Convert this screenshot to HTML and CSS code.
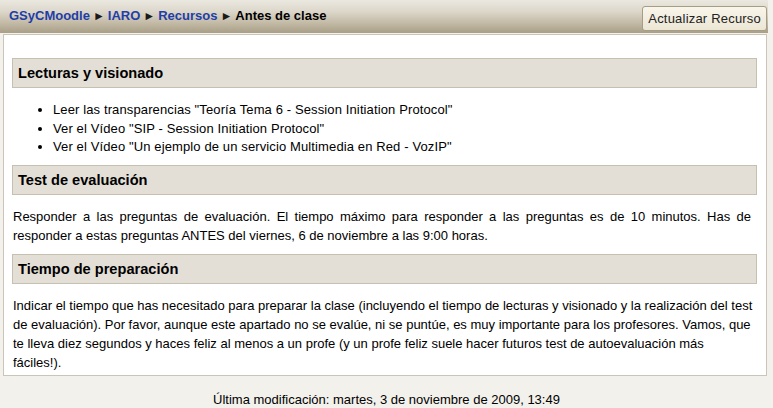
FILE: index.html
```html
<!DOCTYPE html>
<html lang="es">
<head>
<meta charset="utf-8">
<title>Antes de clase</title>
<link rel="stylesheet" href="styles.css">
</head>
<body>
<div class="navbar">
  <div class="breadcrumb">
    <a href="#">GSyCMoodle</a><span class="sep">&#9658;</span><a href="#">IARO</a><span class="sep">&#9658;</span><a href="#">Recursos</a><span class="sep">&#9658;</span><span class="current">Antes de clase</span>
  </div>
  <button class="btn">Actualizar Recurso</button>
</div>
<div class="box">
  <h2 class="sect">Lecturas y visionado</h2>
  <ul class="list">
    <li>Leer las transparencias "Teoría Tema 6 - Session Initiation Protocol"</li>
    <li>Ver el Vídeo "SIP - Session Initiation Protocol"</li>
    <li>Ver el Vídeo "Un ejemplo de un servicio Multimedia en Red - VozIP"</li>
  </ul>
  <h2 class="sect">Test de evaluación</h2>
  <p class="text justified">Responder a las preguntas de evaluación. El tiempo máximo para responder a las preguntas es de 10 minutos. Has de responder a estas preguntas ANTES del viernes, 6 de noviembre a las 9:00 horas.</p>
  <h2 class="sect">Tiempo de preparación</h2>
  <p class="text last">Indicar el tiempo que has necesitado para preparar la clase (incluyendo el tiempo de lecturas y visionado y la realización del test de evaluación). Por favor, aunque este apartado no se evalúe, ni se puntúe, es muy importante para los profesores. Vamos, que te lleva diez segundos y haces feliz al menos a un profe (y un profe feliz suele hacer futuros test de autoevaluación más<br>fáciles!).</p>
</div>
<div class="footer">Última modificación: martes, 3 de noviembre de 2009, 13:49</div>
</body>
</html>
```
FILE: styles.css
```css
html, body {
  margin: 0;
  padding: 0;
}
body {
  background: #f3f1eb;
  font-family: "Liberation Sans", Arial, sans-serif;
  font-size: 13px;
  color: #000;
  width: 768px;
}
.navbar {
  height: 33px;
  background: linear-gradient(#ebe8e1 0%, #dcd7ca 35%, #c3baa6 70%, #a99f87 100%);
  display: flex;
  align-items: center;
  justify-content: space-between;
  padding: 0 1px 0 9px;
  box-sizing: border-box;
}
.breadcrumb {
  font-weight: bold;
  font-size: 13px;
  margin-top: -2px;
}
.breadcrumb a {
  color: #1e3ea8;
  text-decoration: none;
}
.breadcrumb .sep {
  font-size: 12px;
  margin: 0 3px;
  color: #1a1a1a;
}
.btn {
  font-family: "Liberation Sans", Arial, sans-serif;
  font-size: 13px;
  letter-spacing: 0.2px;
  color: #222;
  background: linear-gradient(#f8f5ea, #ece6d4);
  border: 1px solid #a59d86;
  border-radius: 3px;
  height: 25px;
  padding: 0 5px;
  margin-top: 4px;
}
.box {
  margin: 1px 0 0 3px;
  background: #fff;
  border: 1px solid #cac5b6;
  padding: 23px 9px 3px 8px;
  width: 764px;
  box-sizing: border-box;
}
.sect {
  margin: 0;
  background: #e3dfd6;
  border: 1px solid #c6c0b0;
  height: 30px;
  box-sizing: border-box;
  padding: 0 5px;
  display: flex;
  align-items: center;
  font-size: 14.6px;
  font-weight: bold;
}
.list {
  margin: 13px 0 8px;
  padding-left: 41px;
  line-height: 18.5px;
  letter-spacing: 0.12px;
}
.text {
  margin: 12px 0 9px;
  padding-left: 1px;
  line-height: 19px;
}
.text.justified {
  text-align: justify;
  padding-right: 6px;
}
.text.last {
  margin-bottom: 0;
}
.footer {
  text-align: center;
  margin-top: 14px;
  padding-left: 5px;
  line-height: 19px;
}
```
